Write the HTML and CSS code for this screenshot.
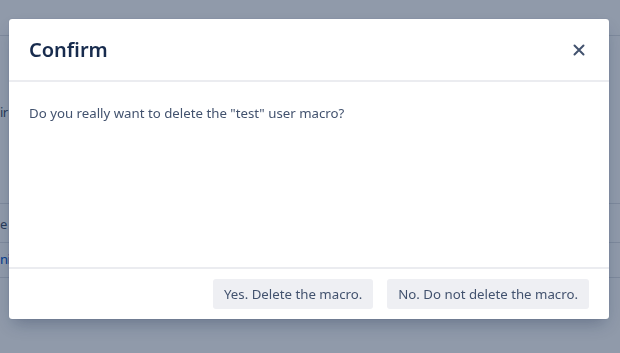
FILE: index.html
```html
<!DOCTYPE html>
<html>
<head>
<meta charset="utf-8">
<link rel="stylesheet" href="styles.css">
</head>
<body>
<div class="page">
  <div class="topbar"></div>
  <div class="row row-first">ir</div>
  <div class="spacer"></div>
  <div class="row row-line">e</div>
  <div class="row row-link">ni</div>
</div>
<div class="overlay">
  <div class="modal">
    <div class="modal-header">
      <h2 class="title">Confirm</h2>
      <button class="close" aria-label="Close">
        <svg width="12" height="12" viewBox="0 0 12 12"><path d="M1.5 1.5 L10.5 10.5 M10.5 1.5 L1.5 10.5" stroke="#42526e" stroke-width="2" stroke-linecap="round"/></svg>
      </button>
    </div>
    <div class="modal-body">Do you really want to delete the "test" user macro?</div>
    <div class="modal-footer">
      <button class="btn">Yes. Delete the macro.</button>
      <button class="btn">No. Do not delete the macro.</button>
    </div>
  </div>
</div>
</body>
</html>
```
FILE: styles.css
```css
html, body {
  margin: 0;
  padding: 0;
  background: #fff;
  font-family: "Noto Sans", "Open Sans", sans-serif;
  color: #172b4d;
}
.page {
  width: 620px;
  height: 353px;
  overflow: hidden;
}
.topbar {
  height: 35px;
  border-bottom: 1px solid #dfe1e6;
}
.row {
  font-size: 13px;
  line-height: 20px;
  color: #42526e;
  letter-spacing: -0.5px;
}
.row-first {
  margin-top: 66px;
}
.spacer {
  height: 81px;
  border-bottom: 1px solid #dfe1e6;
}
.row-line {
  padding: 10px 0 8px;
  border-bottom: 1px solid #dfe1e6;
}
.row-link {
  padding: 6px 0 8px;
  color: #0052cc;
  border-bottom: 1px solid #dfe1e6;
}
.overlay {
  position: fixed;
  inset: 0;
  background: rgba(9, 30, 66, 0.45);
  display: flex;
  align-items: flex-start;
  padding: 19px 0 0 9px;
}
.modal {
  width: 600px;
  height: 300px;
  background: #fff;
  border-radius: 3px;
  box-shadow: 0 8px 16px -4px rgba(9, 30, 66, 0.3), 0 0 1px rgba(9, 30, 66, 0.31);
  display: flex;
  flex-direction: column;
}
.modal-header {
  display: flex;
  align-items: center;
  justify-content: space-between;
  height: 60px;
  padding: 1px 24px 0 20px;
  border-bottom: 2px solid #ebecf0;
}
.title {
  margin: 0;
  font-size: 20px;
  font-weight: 600;
  line-height: 24px;
  color: #172b4d;
}
.close {
  border: 0;
  background: transparent;
  padding: 0;
  width: 12px;
  height: 12px;
  display: flex;
}
.modal-body {
  flex: 1;
  padding: 21px 20px 20px;
  font-size: 13.25px;
  line-height: 20px;
  color: #42526e;
}
.modal-footer {
  border-top: 2px solid #ebecf0;
  height: 50px;
  display: flex;
  align-items: center;
  justify-content: flex-end;
  gap: 14px;
  padding: 0 20px;
}
.btn {
  font-family: inherit;
  font-size: 13.25px;
  line-height: 20px;
  height: 30px;
  padding: 0 11px;
  border: 0;
  border-radius: 3px;
  background: #eeeff3;
  color: #42526e;
}
```
